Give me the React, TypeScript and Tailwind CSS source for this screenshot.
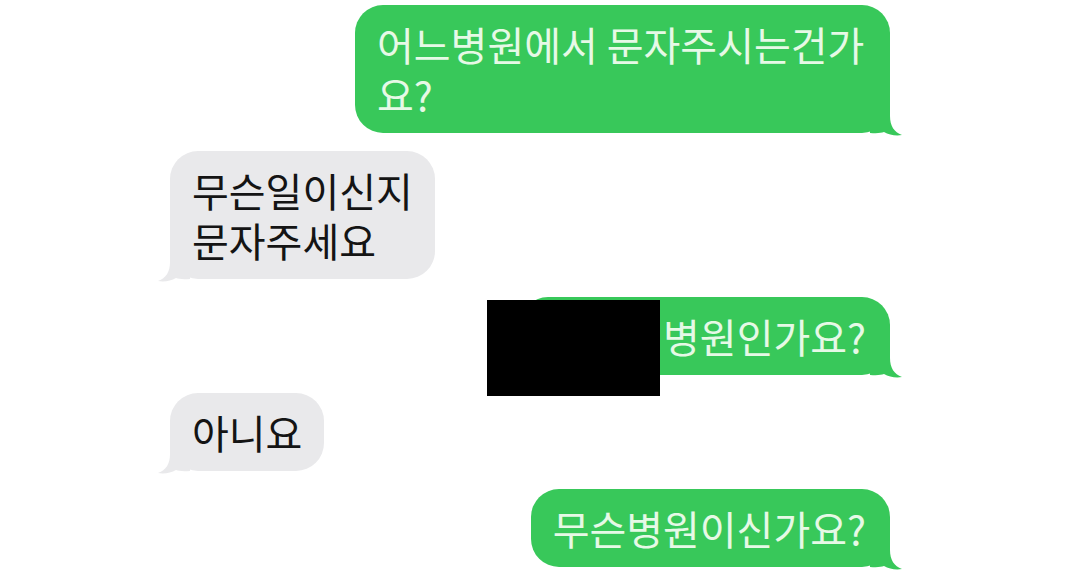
import React from "react";

const GREEN = "#38c85a";
const GRAY = "#e9e9eb";

function Tail({ side, color }: { side: "left" | "right"; color: string }) {
  const pos =
    side === "right"
      ? "absolute right-[-12px] bottom-[-3px]"
      : "absolute left-[-12px] bottom-[-3px] -scale-x-100";
  return (
    <svg className={pos} width="32" height="34" viewBox="0 0 32 34" aria-hidden>
      <path
        d="M20 0 L20 14 C20 24 24 30 32 33 C26 34 19 33 14 30 C11 31 8 31.5 0 31 L0 0 Z"
        fill={color}
      />
    </svg>
  );
}

function Sent({ children, className = "" }: { children: React.ReactNode; className?: string }) {
  return (
    <div
      className={`relative rounded-[28px] bg-[#38c85a] py-[14px] pl-[22px] pr-[24px] text-[40px] leading-[50px] text-[#e6f9e6] ${className}`}
    >
      <span className="relative">{children}</span>
      <Tail side="right" color={GREEN} />
    </div>
  );
}

function Received({ children, className = "" }: { children: React.ReactNode; className?: string }) {
  return (
    <div
      className={`relative rounded-[28px] bg-[#e9e9eb] py-[14px] px-[22px] text-[40px] leading-[50px] text-[#141414] ${className}`}
    >
      <span className="relative">{children}</span>
      <Tail side="left" color={GRAY} />
    </div>
  );
}

export default function App() {
  return (
    <div
      className="h-[580px] w-[1080px] overflow-hidden bg-white"
      style={{ fontFamily: '"Noto Sans CJK KR", "Noto Sans", sans-serif' }}
    >
      <div className="flex w-[890px] flex-col gap-[18px] pl-[170px] pt-[5px]">
        <div className="flex justify-end">
          <Sent className="w-[535px]">
            어느병원에서 문자주시는건가
            <br />
            요?
          </Sent>
        </div>

        <div className="flex justify-start">
          <Received>
            무슨일이신지
            <br />
            문자주세요
          </Received>
        </div>

        <div className="relative flex justify-end">
          <Sent className="w-[370px] text-right">병원인가요?</Sent>
          <div className="absolute left-[317px] top-[3px] h-[96px] w-[173px] bg-black" />
        </div>

        <div className="flex justify-start">
          <Received>아니요</Received>
        </div>

        <div className="flex justify-end">
          <Sent>무슨병원이신가요?</Sent>
        </div>
      </div>
    </div>
  );
}
